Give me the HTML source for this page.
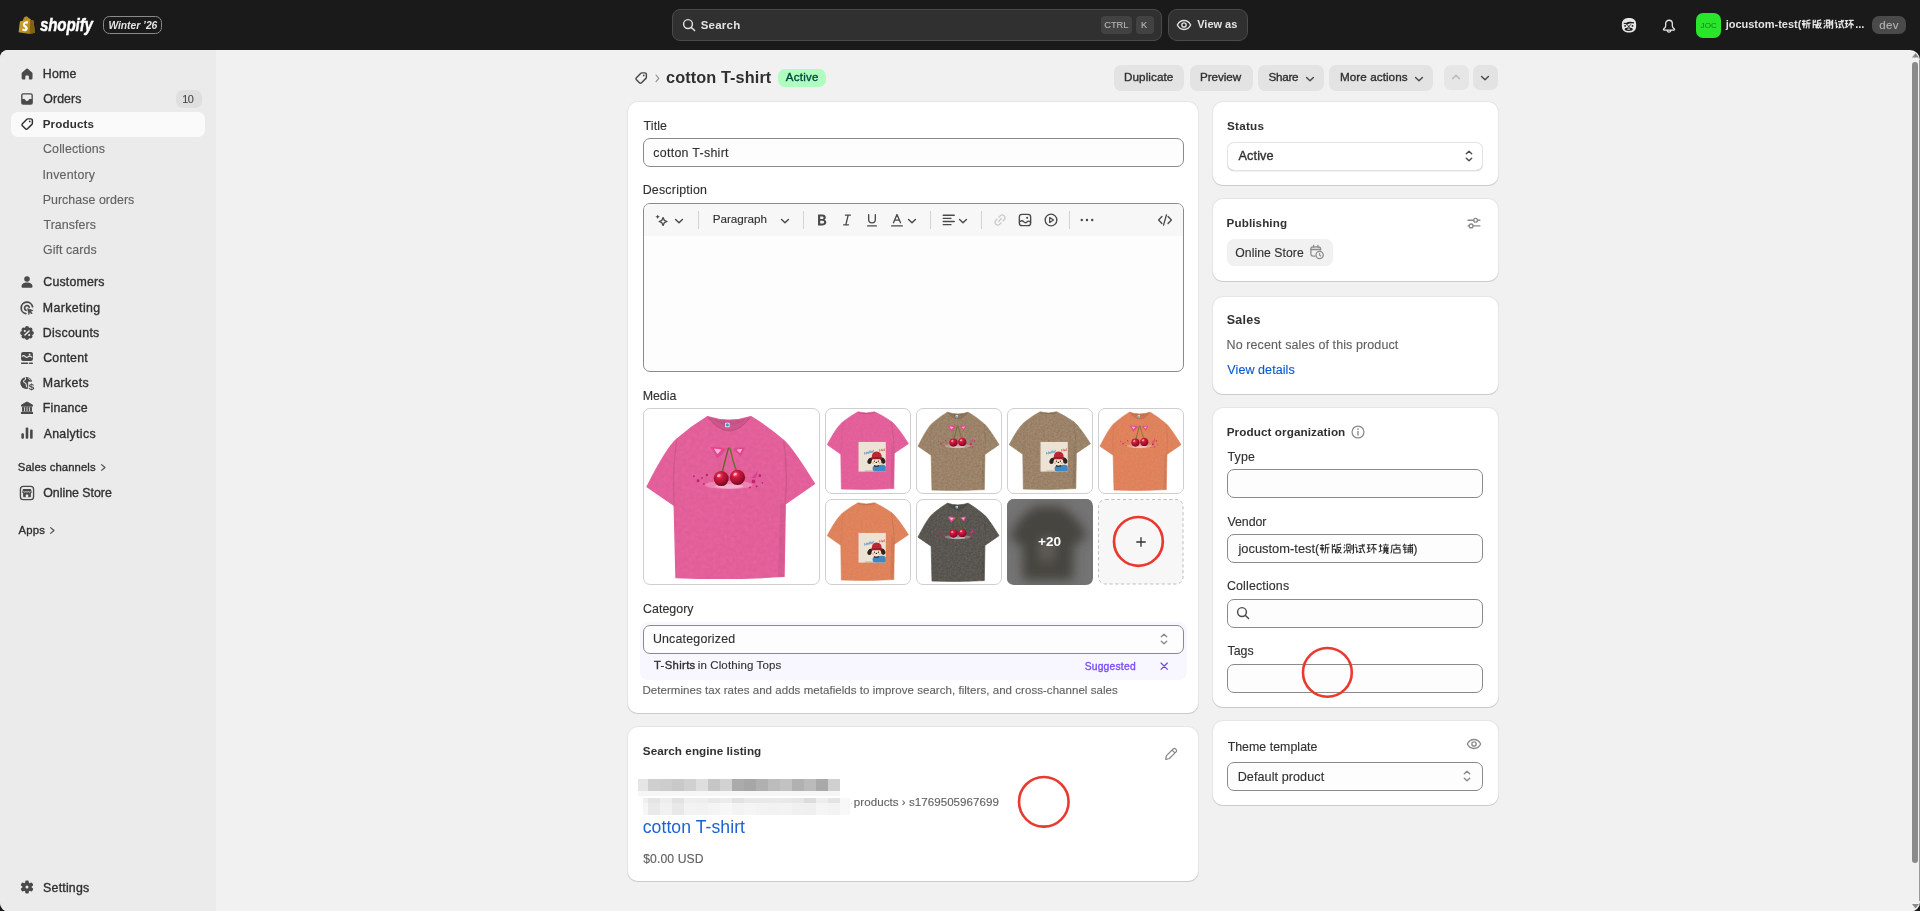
<!DOCTYPE html>
<html lang="en"><head><meta charset="utf-8"><title>cotton T-shirt · Shopify</title><style>
*{margin:0;padding:0}
html,body{width:1920px;height:911px;overflow:hidden;background:#1a1a1a}
body{font-family:"Liberation Sans",sans-serif;position:relative;-webkit-font-smoothing:antialiased}
#app{position:absolute;left:0;top:0;width:1920px;height:911px;will-change:transform}
.a{position:absolute;display:block}
.t{position:absolute;white-space:nowrap;line-height:1;font-family:"Liberation Sans",sans-serif}
svg{overflow:visible}
</style></head>
<body>
<div id="app">
<div class="a " style="left:0.00px;top:0.00px;width:1920.00px;height:911.00px;background:#1a1a1a"></div>
<div class="a " style="left:0.00px;top:49.60px;width:1920.00px;height:862.00px;background:#f1f1f1;border-radius:8px 10px 10px 9.5px;overflow:hidden"><div class="a " style="left:0.00px;top:0.00px;width:216.00px;height:862.00px;background:#ebebeb"></div></div>
<svg class="a" style="left:18.30px;top:15.90px;" width="17.40" height="18.60" viewBox="0 0 18 19.2">
<defs><linearGradient id="bagg" x1="0" y1="0" x2="1" y2="1"><stop offset="0" stop-color="#d9ab30"/><stop offset=".55" stop-color="#bd9224"/><stop offset="1" stop-color="#97741a"/></linearGradient></defs>
<path d="M5.3 4.6 C5.6 2.2 7 .5 8.6 .5 c1.1 0 1.9 .7 2.4 1.9 l1.5 .5 l1.2 1.4 l2.3 .4 l1.6 12.6 l-5.4 1.4 l-11.6 -2 L2 5.6 Z" fill="url(#bagg)"/>
<path d="M12.5 2.9 l1.2 1.4 l2.3 .4 l1.6 12.6 l-5.4 1.4 Z" fill="#84620f"/>
<path d="M6.3 4.5 C6.6 2.9 7.5 1.6 8.6 1.5 M8.4 4.2 C8.6 2.9 9.3 1.9 10.2 1.9" fill="none" stroke="#8d6a17" stroke-width=".7"/>
<path d="M11.1 7.3 l-.7 2 s-.7 -.4 -1.6 -.3 c-1.3 .1 -1.3 .9 -1.3 1.1 c.1 1.1 3 1.4 3.2 4 c.1 2.1 -1.1 3.5 -2.9 3.6 c-2.100 .1 -3.300 -1.100 -3.300 -1.100 l.5 -1.900 s1.200 .900 2.100 .800 c.6 0 .8 -.5 .8 -.9 c-.1 -1.500 -2.500 -1.400 -2.600 -3.800 c-.1 -2 1.200 -4.100 4.100 -4.300 c1.100 -.1 1.700 .2 1.700 .2 Z" fill="#fff" transform="translate(.2 -.6) scale(.92)"/>
</svg>
<div id="wordmark" class="t" style="left:40.2px;top:15.2px;font-size:19.2px;font-weight:bold;font-style:italic;color:#fff;letter-spacing:-0.2px;-webkit-text-stroke:0.45px #fff;transform-origin:0 0;transform:scaleX(.79)">shopify</div>
<div class="a " style="left:102.75px;top:16.00px;width:59.25px;height:18.00px;border:1px solid #8a8a8a;border-radius:6.5px;box-sizing:border-box"></div>
<div id="winter" class="t " style="left:108.38px;top:21.03px;font-size:10.30px;font-weight:bold;color:#e3e3e3;letter-spacing:-0.020px;font-style:italic;">Winter ’26</div>
<div class="a " style="left:672.00px;top:9.00px;width:490.00px;height:31.60px;background:#303030;border:1px solid #4a4a4a;border-radius:8px;box-sizing:border-box"></div>
<svg class="a" style="left:680.20px;top:16.10px;color:#e3e3e3;fill:currentColor;" width="18.00" height="18.00" viewBox="0 0 20 20"><path d="M13 13 L16.2 16.2" fill="none" stroke="currentColor" stroke-width="1.7" stroke-linecap="round" stroke-linejoin="round" /><circle cx="8.9" cy="8.9" r="4.9" fill="none" stroke="currentColor" stroke-width="1.6"/></svg>
<div id="search" class="t " style="left:700.63px;top:20.03px;font-size:11.50px;font-weight:bold;color:#e3e3e3;letter-spacing:0.235px;">Search</div>
<div class="a " style="left:1101.00px;top:16.00px;width:31.00px;height:18.00px;background:#424242;border-radius:4px"></div>
<div id="ctrl" class="t " style="left:1104.30px;top:21.03px;font-size:9.30px;font-weight:normal;color:#b5b5b5;letter-spacing:-0.084px;-webkit-text-stroke:0.12px #b5b5b5;">CTRL</div>
<div class="a " style="left:1136.00px;top:16.00px;width:18.00px;height:18.00px;background:#424242;border-radius:4px"></div>
<div id="kk" class="t " style="left:1140.96px;top:21.03px;font-size:9.30px;font-weight:normal;color:#b5b5b5;letter-spacing:0.000px;-webkit-text-stroke:0.12px #b5b5b5;">K</div>
<div class="a " style="left:1168.00px;top:9.00px;width:79.75px;height:31.60px;background:#303030;border:1px solid #4a4a4a;border-radius:9px;box-sizing:border-box"></div>
<svg class="a" style="left:1175.30px;top:16.20px;color:#e3e3e3;fill:currentColor;" width="18.00" height="18.00" viewBox="0 0 20 20"><path d="M2.6 10 c1.6 -3.3 4.3 -5 7.4 -5 s5.8 1.7 7.4 5 c-1.6 3.3 -4.3 5 -7.4 5 s-5.8 -1.7 -7.4 -5 Z" fill="none" stroke="currentColor" stroke-width="1.5" stroke-linecap="round" stroke-linejoin="round" /><circle cx="10" cy="10" r="2.4" fill="none" stroke="currentColor" stroke-width="1.5"/></svg>
<div id="viewas" class="t " style="left:1197.21px;top:19.03px;font-size:11.00px;font-weight:bold;color:#e3e3e3;letter-spacing:-0.003px;">View as</div>
<svg class="a" style="left:1620.40px;top:16.30px;color:#e8e8e8;fill:currentColor;" width="18.00" height="18.00" viewBox="0 0 20 20"><rect x="2.1" y="2.3" width="15.8" height="16.1" rx="6.4" fill="currentColor"/><path d="M4.1 7.9 q1.5 -.9 2.5 0 q3.4 -2.5 8.9 -.9 l.1 1.3 q-4.2 -.9 -7 .9 q-1.300 .700 -2.300 -.3 q-1 -.5 -2.100 .3 Z" fill="#1a1a1a"/><circle cx="5.7" cy="11" r="1.05" fill="#1a1a1a"/><circle cx="13.9" cy="11" r="1.05" fill="#1a1a1a"/><path d="M7.3 9.300 L11 12.600 M12.300 9.300 L8.600 12.600" stroke="#1a1a1a" stroke-width=".95" stroke-linecap="round" fill="none"/><ellipse cx="9.700" cy="14.700" rx="4.500" ry="1.900" fill="#1a1a1a"/><ellipse cx="9.700" cy="14.500" rx="2" ry=".65" fill="currentColor"/></svg>
<svg class="a" style="left:1660.40px;top:16.60px;color:#e3e3e3;fill:currentColor;" width="18.00" height="18.00" viewBox="0 0 20 20"><path d="M10 3.6 a3.7 3.7 0 0 0 -3.7 3.7 v2.4 c0 1 -.45 1.9 -1.15 2.6 l-1.1 1.1 c-.45 .45 -.15 1.2 .5 1.2 h10.9 c.65 0 .95 -.75 .5 -1.2 l-1.1 -1.1 c-.7 -.7 -1.15 -1.6 -1.15 -2.6 V7.3 A3.7 3.7 0 0 0 10 3.6 Z M7.9 15.2 a2.2 2.4 0 0 0 4.2 0" fill="none" stroke="currentColor" stroke-width="1.45" stroke-linecap="round" stroke-linejoin="round" /></svg>
<div class="a " style="left:1696.20px;top:13.00px;width:25.00px;height:25.00px;background:#29e62b;border-radius:7px"></div>
<div id="joc" class="t " style="left:1700.44px;top:22.03px;font-size:8.10px;font-weight:normal;color:#0f8316;letter-spacing:0.163px;-webkit-text-stroke:0.12px #0f8316;-webkit-text-stroke:0">JOC</div>
<div id="store" class="t " style="left:1725.64px;top:19.03px;font-size:11.00px;font-weight:bold;color:#e3e3e3;letter-spacing:0.000px;">jocustom-test(</div>
<svg class="a" style="left:1801.20px;top:18.90px" width="10.80" height="10.80" viewBox="0 0 10.6 10.6"><path d="M1 2.2h3.6M2.8 .8v3.2M.8 4.6h4M1.4 6.2l1-1.4M3.2 4.8l.9 1.6M2.8 4.6v4.6M5.6 1.6q2 -.2 3.6 -.8M5.8 1.4v4q0 2.6 -1 3.8M5.8 4.2h3.6M7.8 4.2v5.2" fill="none" stroke="#e3e3e3" stroke-width="1.30"/></svg><svg class="a" style="left:1812.00px;top:18.90px" width="10.80" height="10.80" viewBox="0 0 10.6 10.6"><path d="M1.2 .8v8.4M1.2 3h2.6M1.2 5.6h2.8v3.6M3.2 .8v2.2M5.2 1.6q2 -.2 3.8 -.8M5.4 1.4v3.4q0 3 -1 4.4M5.4 4h3.4q-.4 3 -3.2 5.2M6.2 5.2q1 2.6 3.2 4" fill="none" stroke="#e3e3e3" stroke-width="1.30"/></svg><svg class="a" style="left:1822.80px;top:18.90px" width="10.80" height="10.80" viewBox="0 0 10.6 10.6"><path d="M1 1.4l1 .9M.6 3.8l1 .9M.7 9.2l1.5 -3M3.4 1.2h3v5.6h-3zM4.9 2.8v2.4M3.6 9.2l1 -1.6M6 7.6l.9 1.6M8 1.8v4.6M9.4 .8v7.6q0 .9 -1.2 .8" fill="none" stroke="#e3e3e3" stroke-width="1.30"/></svg><svg class="a" style="left:1833.60px;top:18.90px" width="10.80" height="10.80" viewBox="0 0 10.6 10.6"><path d="M1.2 1.2l1 1M.6 3.8h1.8v4.4l1.4 -1M4 2.6h5.6M7.4 .8q.2 5.6 2.4 8.4M4.4 5h2.6M5.6 5v3.4M4.2 8.8l3 -.8M8.6 1l.8 .9" fill="none" stroke="#e3e3e3" stroke-width="1.30"/></svg><svg class="a" style="left:1844.40px;top:18.90px" width="10.80" height="10.80" viewBox="0 0 10.6 10.6"><path d="M.8 1.6h3.2M.8 4.6h3.2M2.4 1.6v6M.6 8.4l3.4 -1.2M4.6 1.4h5M7.2 1.4q-1 3.2 -2.8 5.2M7 3.8v5.6M7.6 4.4l1.8 2" fill="none" stroke="#e3e3e3" stroke-width="1.30"/></svg>
<div id="dots3" class="t " style="left:1855.24px;top:19.03px;font-size:11.00px;font-weight:bold;color:#e3e3e3;letter-spacing:0.000px;">...</div>
<div class="a " style="left:1872.00px;top:16.20px;width:34.20px;height:17.60px;background:#4a4a4a;border-radius:7px"></div>
<div id="dev" class="t " style="left:1879.29px;top:20.03px;font-size:11.50px;font-weight:normal;color:#b5b5b5;letter-spacing:0.288px;-webkit-text-stroke:0.12px #b5b5b5;">dev</div>
<div class="a " style="left:1912.00px;top:62.00px;width:6.00px;height:801.00px;background:#8a8a8a;border-radius:3px"></div>
<svg class="a" style="left:1911.60px;top:52.60px;" width="7.00" height="4.60" viewBox="0 0 7 4.6"><path d="M0 4.6 L3.5 0 L7 4.6 Z" fill="#8a8a8a"/></svg>
<svg class="a" style="left:1911.60px;top:903.60px;" width="7.00" height="4.60" viewBox="0 0 7 4.6"><path d="M0 0 L3.5 4.6 L7 0 Z" fill="#8a8a8a"/></svg>
<div class="a " style="left:1919.00px;top:60.00px;width:1.00px;height:841.00px;background:#9a9a9a"></div>
<svg class="a" style="left:18.20px;top:64.55px;color:#4a4a4a;fill:currentColor;" width="18.00" height="18.00" viewBox="0 0 20 20"><g transform="translate(10.10 10.10) scale(0.930) translate(-10 -10)"><path d="M9.1 3.75 a1.4 1.4 0 0 1 1.8 0 l5.05 4.3 a1.5 1.5 0 0 1 .55 1.15 V14.9 a1.6 1.6 0 0 1 -1.6 1.6 H12.6 a.5 .5 0 0 1 -.5 -.5 V13 a1.25 1.25 0 0 0 -1.25 -1.25 h-1.7 A1.25 1.25 0 0 0 7.9 13 v3 a.5 .5 0 0 1 -.5 .5 H5.1 a1.6 1.6 0 0 1 -1.6 -1.6 V9.2 a1.5 1.5 0 0 1 .55 -1.15 Z" fill="currentColor" /></g></svg>
<div id="n_home" class="t " style="left:42.80px;top:68.03px;font-size:12.35px;font-weight:normal;color:#303030;letter-spacing:0.245px;-webkit-text-stroke:0.35px #303030;">Home</div>
<svg class="a" style="left:18.20px;top:89.50px;color:#4a4a4a;fill:currentColor;" width="18.00" height="18.00" viewBox="0 0 20 20"><path d="M5.75 3.5 h8.5 A2.25 2.25 0 0 1 16.5 5.75 v8.5 a2.25 2.25 0 0 1 -2.25 2.25 h-8.5 A2.25 2.25 0 0 1 3.5 14.25 v-8.5 A2.25 2.25 0 0 1 5.75 3.5 Z M5.9 5 a.9 .9 0 0 0 -.9 .9 V10 h2.1 c.45 0 .8 .3 .95 .7 a2.05 2.05 0 0 0 3.9 0 c.15 -.4 .5 -.7 .95 -.7 H15 V5.9 a.9 .9 0 0 0 -.9 -.9 Z" fill="currentColor" fill-rule="evenodd"/></svg>
<div id="n_orders" class="t " style="left:43.20px;top:93.03px;font-size:12.35px;font-weight:normal;color:#303030;letter-spacing:0.114px;-webkit-text-stroke:0.35px #303030;">Orders</div>
<div class="a " style="left:176.00px;top:90.00px;width:25.50px;height:17.50px;background:#dfdfdf;border-radius:7px"></div>
<div id="n_10" class="t " style="left:182.27px;top:94.03px;font-size:10.90px;font-weight:normal;color:#4a4a4a;letter-spacing:-0.616px;-webkit-text-stroke:0.12px #4a4a4a;">10</div>
<div class="a " style="left:11.00px;top:112.20px;width:193.80px;height:24.80px;background:#fafafa;border-radius:7px"></div>
<svg class="a" style="left:18.20px;top:114.90px;color:#303030;fill:currentColor;" width="18.00" height="18.00" viewBox="0 0 20 20"><g transform="translate(10.15 10.10) scale(0.930) translate(-10 -10)"><path d="M10.9 3.75 h3.6 a1.75 1.75 0 0 1 1.75 1.75 v3.6 a1.75 1.75 0 0 1 -.51 1.24 l-5.3 5.3 a1.75 1.75 0 0 1 -2.48 0 l-3.6 -3.6 a1.75 1.75 0 0 1 0 -2.48 l5.3 -5.3 a1.75 1.75 0 0 1 1.24 -.51 Z" fill="none" stroke="currentColor" stroke-width="1.75" stroke-linecap="round" stroke-linejoin="round" /><circle cx="13.1" cy="6.9" r="1.05" fill="currentColor"/></g></svg>
<div id="n_products" class="t " style="left:42.76px;top:118.03px;font-size:11.60px;font-weight:bold;color:#303030;letter-spacing:0.132px;">Products</div>
<div id="n_coll" class="t " style="left:43.06px;top:143.03px;font-size:12.40px;font-weight:normal;color:#616161;letter-spacing:0.127px;-webkit-text-stroke:0.12px #616161;">Collections</div>
<div id="n_inv" class="t " style="left:42.41px;top:169.04px;font-size:12.40px;font-weight:normal;color:#616161;letter-spacing:0.206px;-webkit-text-stroke:0.12px #616161;">Inventory</div>
<div id="n_po" class="t " style="left:42.63px;top:194.04px;font-size:12.40px;font-weight:normal;color:#616161;letter-spacing:0.056px;-webkit-text-stroke:0.12px #616161;">Purchase orders</div>
<div id="n_tr" class="t " style="left:43.49px;top:219.04px;font-size:12.40px;font-weight:normal;color:#616161;letter-spacing:0.061px;-webkit-text-stroke:0.12px #616161;">Transfers</div>
<div id="n_gift" class="t " style="left:43.01px;top:244.04px;font-size:12.40px;font-weight:normal;color:#616161;letter-spacing:0.075px;-webkit-text-stroke:0.12px #616161;">Gift cards</div>
<svg class="a" style="left:18.20px;top:273.20px;color:#4a4a4a;fill:currentColor;" width="18.00" height="18.00" viewBox="0 0 20 20"><circle cx="10" cy="6.6" r="3.1" fill="currentColor"/><path d="M3.9 15 c0 -2.9 2.8 -4.4 6.1 -4.4 s6.1 1.5 6.1 4.4 c0 .85 -.65 1.5 -1.5 1.5 H5.4 c-.85 0 -1.5 -.65 -1.5 -1.5 Z" fill="currentColor" /></svg>
<div id="n_cust" class="t " style="left:43.27px;top:276.04px;font-size:12.35px;font-weight:normal;color:#303030;letter-spacing:0.197px;-webkit-text-stroke:0.35px #303030;">Customers</div>
<svg class="a" style="left:18.20px;top:298.90px;color:#4a4a4a;fill:currentColor;" width="18.00" height="18.00" viewBox="0 0 20 20"><path d="M16.2 8.6 A6.4 6.4 0 1 0 8.7 16.2" fill="none" stroke="currentColor" stroke-width="1.9" stroke-linecap="round" stroke-linejoin="round" /><path d="M12.5 9.0 A2.7 2.7 0 1 0 9.0 12.5" fill="none" stroke="currentColor" stroke-width="1.9" stroke-linecap="round" stroke-linejoin="round" /><path d="M10.6 10.6 l6.2 2.1 l-2.7 1.2 l1.8 1.8 l-.95 .95 l-1.8 -1.8 l-1.2 2.7 Z" fill="currentColor" stroke="currentColor" stroke-width=".6" stroke-linejoin="round"/></svg>
<div id="n_mkt" class="t " style="left:42.80px;top:302.03px;font-size:12.35px;font-weight:normal;color:#303030;letter-spacing:0.395px;-webkit-text-stroke:0.35px #303030;">Marketing</div>
<svg class="a" style="left:18.20px;top:324.00px;color:#4a4a4a;fill:currentColor;" width="18.00" height="18.00" viewBox="0 0 20 20"><circle cx="15.30" cy="10.00" r="2.35" fill="currentColor"/><circle cx="13.75" cy="13.75" r="2.35" fill="currentColor"/><circle cx="10.00" cy="15.30" r="2.35" fill="currentColor"/><circle cx="6.25" cy="13.75" r="2.35" fill="currentColor"/><circle cx="4.70" cy="10.00" r="2.35" fill="currentColor"/><circle cx="6.25" cy="6.25" r="2.35" fill="currentColor"/><circle cx="10.00" cy="4.70" r="2.35" fill="currentColor"/><circle cx="13.75" cy="6.25" r="2.35" fill="currentColor"/><circle cx="10" cy="10" r="6.1" fill="currentColor"/><path d="M7.7 12.3 L12.3 7.7" stroke="#ebebeb" stroke-width="1.65" stroke-linecap="round"/><circle cx="7.6" cy="7.8" r="1.2" fill="#ebebeb"/><circle cx="12.4" cy="12.2" r="1.2" fill="#ebebeb"/></svg>
<div id="n_disc" class="t " style="left:42.80px;top:327.03px;font-size:12.35px;font-weight:normal;color:#303030;letter-spacing:0.287px;-webkit-text-stroke:0.35px #303030;">Discounts</div>
<svg class="a" style="left:18.20px;top:349.20px;color:#4a4a4a;fill:currentColor;" width="18.00" height="18.00" viewBox="0 0 20 20"><path d="M5.6 3.4 h8.8 a2.2 2.2 0 0 1 2.2 2.2 v5.4 a2.2 2.2 0 0 1 -2.2 2.2 h-8.8 a2.2 2.2 0 0 1 -2.2 -2.2 V5.6 a2.2 2.2 0 0 1 2.2 -2.2 Z" fill="currentColor" /><path d="M4.6 8.0 c1.4 -1.0 2.5 -.7 3.6 .5 c1 1.100 1.900 1.100 2.900 .2 c1.200 -1.100 2.600 -1.100 4.300 .4" fill="none" stroke="#ebebeb" stroke-width="1.25" stroke-linecap="round"/><circle cx="12.900" cy="6.100" r="1" fill="#ebebeb"/><path d="M4.1 15.9 h6.6 M12.9 15.9 h3" fill="none" stroke="currentColor" stroke-width="1.6" stroke-linecap="round" stroke-linejoin="round" /></svg>
<div id="n_cont" class="t " style="left:43.27px;top:352.03px;font-size:12.35px;font-weight:normal;color:#303030;letter-spacing:0.188px;-webkit-text-stroke:0.35px #303030;">Content</div>
<svg class="a" style="left:18.20px;top:374.20px;color:#4a4a4a;fill:currentColor;" width="18.00" height="18.00" viewBox="0 0 20 20"><circle cx="9.3" cy="9.9" r="6.7" fill="currentColor"/><path d="M7.9 4.0 c1.2 1.3 .3 2.300 -.8 2.800 c-1.300 .6 -1.200 1.800 -.1 2.500 c1.400 .9 2.400 1.300 2.200 2.800 c-.1 1 .2 1.700 .7 2.300" fill="none" stroke="#ebebeb" stroke-width="1.15" stroke-linecap="round"/><path d="M12.2 4.3 c-.6 1.100 .1 1.900 1.300 2.200" fill="none" stroke="#ebebeb" stroke-width="1.05" stroke-linecap="round"/><rect x="11.3" y="8.500" width="8" height="10.5" fill="#ebebeb"/><text x="15.1" y="17.600" font-family="Liberation Sans" font-weight="bold" font-size="11" text-anchor="middle" fill="currentColor">$</text></svg>
<div id="n_mark" class="t " style="left:42.80px;top:377.03px;font-size:12.35px;font-weight:normal;color:#303030;letter-spacing:0.321px;-webkit-text-stroke:0.35px #303030;">Markets</div>
<svg class="a" style="left:18.20px;top:398.80px;color:#4a4a4a;fill:currentColor;" width="18.00" height="18.00" viewBox="0 0 20 20"><path d="M8.9 3.2 a2.2 2.2 0 0 1 2.2 0 l4.9 2.8 a1.300 1.300 0 0 1 .65 1.130 V7.500 a1 1 0 0 1 -1 1 H4.350 a1 1 0 0 1 -1 -1 V7.130 a1.300 1.300 0 0 1 .65 -1.130 Z" fill="currentColor" /><path d="M4.5 9.0 h11 v5 h-11 Z" fill="currentColor" /><path d="M7.3 9.300 v4.400 M10 9.300 v4.400 M12.700 9.300 v4.400" stroke="#ebebeb" stroke-width=".95"/><path d="M4.3 14.2 h11.400 a1.100 1.100 0 0 1 1.100 1.100 v.4 a1 1 0 0 1 -1 1 H4.200 a1 1 0 0 1 -1 -1 v-.4 a1.100 1.100 0 0 1 1.100 -1.100 Z" fill="currentColor" /></svg>
<div id="n_fin" class="t " style="left:42.80px;top:402.03px;font-size:12.35px;font-weight:normal;color:#303030;letter-spacing:0.165px;-webkit-text-stroke:0.35px #303030;">Finance</div>
<svg class="a" style="left:18.20px;top:424.40px;color:#4a4a4a;fill:currentColor;" width="18.00" height="18.00" viewBox="0 0 20 20"><rect x="3.7" y="10.2" width="2.9" height="6.1" rx="1" fill="currentColor"/><rect x="8.55" y="3.9" width="2.9" height="12.4" rx="1" fill="currentColor"/><rect x="13.4" y="6.2" width="2.9" height="10.1" rx="1" fill="currentColor"/></svg>
<div id="n_ana" class="t " style="left:43.65px;top:428.03px;font-size:12.35px;font-weight:normal;color:#303030;letter-spacing:0.318px;-webkit-text-stroke:0.35px #303030;">Analytics</div>
<div id="n_sales" class="t " style="left:17.83px;top:462.04px;font-size:11.30px;font-weight:normal;color:#303030;letter-spacing:0.084px;-webkit-text-stroke:0.35px #303030;">Sales channels</div>
<svg class="a" style="left:100.40px;top:462.90px;color:#4a4a4a" width="7.00" height="9.00" viewBox="0 0 7 9"><path d="M1.6 1.6 L5 4.5 L1.6 7.4" fill="none" stroke="currentColor" stroke-width="1.1" stroke-linecap="round" stroke-linejoin="round" /></svg>
<svg class="a" style="left:18.20px;top:483.90px;color:#4a4a4a;fill:currentColor;" width="18.00" height="18.00" viewBox="0 0 20 20"><rect x="2.7" y="2.7" width="14.6" height="14.6" rx="3.2" fill="none" stroke="currentColor" stroke-width="1.5"/><path d="M5.6 5.6 h8.8 l.8 3.1 a1.55 1.55 0 0 1 -.9 1.75 V14 a.8 .8 0 0 1 -.8 .8 H6.5 a.8 .8 0 0 1 -.8 -.8 v-3.55 a1.55 1.55 0 0 1 -.9 -1.75 Z" fill="currentColor" /><path d="M6.3 8.2 a1 1 0 0 0 2 0 M9 8.2 a1 1 0 0 0 2 0 M11.7 8.2 a1 1 0 0 0 2 0" fill="none" stroke="#ebebeb" stroke-width=".9"/><rect x="8.6" y="11.6" width="2.8" height="3.3" rx=".5" fill="#ebebeb"/></svg>
<div id="n_os" class="t " style="left:43.20px;top:487.04px;font-size:12.35px;font-weight:normal;color:#303030;letter-spacing:0.002px;-webkit-text-stroke:0.35px #303030;">Online Store</div>
<div id="n_apps" class="t " style="left:18.54px;top:525.02px;font-size:11.30px;font-weight:normal;color:#303030;letter-spacing:0.173px;-webkit-text-stroke:0.35px #303030;">Apps</div>
<svg class="a" style="left:49.40px;top:525.80px;color:#4a4a4a" width="7.00" height="9.00" viewBox="0 0 7 9"><path d="M1.6 1.6 L5 4.5 L1.6 7.4" fill="none" stroke="currentColor" stroke-width="1.1" stroke-linecap="round" stroke-linejoin="round" /></svg>
<svg class="a" style="left:18.20px;top:878.10px;color:#4a4a4a;fill:currentColor;" width="18.00" height="18.00" viewBox="0 0 20 20"><rect x="8.0" y="2.75" width="4.0" height="5.2" rx="1.35" fill="currentColor" transform="rotate(0 10 10)"/><rect x="8.0" y="2.75" width="4.0" height="5.2" rx="1.35" fill="currentColor" transform="rotate(60 10 10)"/><rect x="8.0" y="2.75" width="4.0" height="5.2" rx="1.35" fill="currentColor" transform="rotate(120 10 10)"/><rect x="8.0" y="2.75" width="4.0" height="5.2" rx="1.35" fill="currentColor" transform="rotate(180 10 10)"/><rect x="8.0" y="2.75" width="4.0" height="5.2" rx="1.35" fill="currentColor" transform="rotate(240 10 10)"/><rect x="8.0" y="2.75" width="4.0" height="5.2" rx="1.35" fill="currentColor" transform="rotate(300 10 10)"/><circle cx="10" cy="10" r="5.15" fill="currentColor"/><circle cx="10" cy="10" r="1.7" fill="#ebebeb"/></svg>
<div id="n_set" class="t " style="left:43.12px;top:882.03px;font-size:12.35px;font-weight:normal;color:#303030;letter-spacing:0.212px;-webkit-text-stroke:0.35px #303030;">Settings</div>
<svg class="a" style="left:632.10px;top:68.90px;color:#4a4a4a;fill:currentColor;" width="18.00" height="18.00" viewBox="0 0 20 20"><g transform="translate(10.15 10.10) scale(0.930) translate(-10 -10)"><path d="M10.9 3.75 h3.6 a1.75 1.75 0 0 1 1.75 1.75 v3.6 a1.75 1.75 0 0 1 -.51 1.24 l-5.3 5.3 a1.75 1.75 0 0 1 -2.48 0 l-3.6 -3.6 a1.75 1.75 0 0 1 0 -2.48 l5.3 -5.3 a1.75 1.75 0 0 1 1.24 -.51 Z" fill="none" stroke="currentColor" stroke-width="1.75" stroke-linecap="round" stroke-linejoin="round" /><circle cx="13.1" cy="6.9" r="1.05" fill="currentColor"/></g></svg>
<svg class="a" style="left:655.00px;top:74.40px;color:#8a8a8a" width="5.40" height="8.60" viewBox="0 0 5.4 8.6"><path d="M1 1 L3.8 4.3 L1 7.6" fill="none" stroke="currentColor" stroke-width="1.05" stroke-linecap="round" stroke-linejoin="round" /></svg>
<div id="h_title" class="t " style="left:666.00px;top:69.04px;font-size:16.30px;font-weight:bold;color:#303030;letter-spacing:0.094px;">cotton T-shirt</div>
<div class="a " style="left:777.75px;top:68.75px;width:48.25px;height:18.25px;background:#affebf;border-radius:7px"></div>
<div id="h_active" class="t " style="left:785.69px;top:72.03px;font-size:11.50px;font-weight:normal;color:#014b40;letter-spacing:0.286px;-webkit-text-stroke:0.35px #014b40;">Active</div>
<div class="a " style="left:1114.00px;top:65.00px;width:69.75px;height:25.60px;background:#e3e3e3;border-radius:7px"></div>
<div id="b_dup" class="t " style="left:1123.92px;top:71.04px;font-size:11.70px;font-weight:normal;color:#303030;letter-spacing:0.093px;-webkit-text-stroke:0.35px #303030;">Duplicate</div>
<div class="a " style="left:1190.25px;top:65.00px;width:62.50px;height:25.60px;background:#e3e3e3;border-radius:7px"></div>
<div id="b_prev" class="t " style="left:1199.92px;top:71.04px;font-size:11.70px;font-weight:normal;color:#303030;letter-spacing:-0.056px;-webkit-text-stroke:0.35px #303030;">Preview</div>
<div class="a " style="left:1258.10px;top:65.00px;width:65.65px;height:25.60px;background:#e3e3e3;border-radius:7px"></div>
<div id="b_share" class="t " style="left:1268.57px;top:71.04px;font-size:11.70px;font-weight:normal;color:#303030;letter-spacing:-0.315px;-webkit-text-stroke:0.35px #303030;">Share</div>
<svg class="a" style="left:1300.50px;top:69.90px;color:#4a4a4a;fill:currentColor;" width="18.00" height="18.00" viewBox="0 0 20 20"><path d="M6.2 8.3 L10 12 L13.8 8.3" fill="none" stroke="currentColor" stroke-width="1.6" stroke-linecap="round" stroke-linejoin="round" /></svg>
<div class="a " style="left:1329.00px;top:65.00px;width:103.75px;height:25.60px;background:#e3e3e3;border-radius:7px"></div>
<div id="b_more" class="t " style="left:1339.93px;top:71.04px;font-size:11.70px;font-weight:normal;color:#303030;letter-spacing:0.071px;-webkit-text-stroke:0.35px #303030;">More actions</div>
<svg class="a" style="left:1409.50px;top:69.90px;color:#4a4a4a;fill:currentColor;" width="18.00" height="18.00" viewBox="0 0 20 20"><path d="M6.2 8.3 L10 12 L13.8 8.3" fill="none" stroke="currentColor" stroke-width="1.6" stroke-linecap="round" stroke-linejoin="round" /></svg>
<div class="a " style="left:1444.00px;top:65.00px;width:24.75px;height:25.00px;background:#e6e6e6;border-radius:7px"></div>
<svg class="a" style="left:1447.40px;top:68.30px;color:#bdbdbd;fill:currentColor;" width="18.00" height="18.00" viewBox="0 0 20 20"><path d="M6.2 11.8 L10 8.1 L13.8 11.8" fill="none" stroke="currentColor" stroke-width="1.6" stroke-linecap="round" stroke-linejoin="round" /></svg>
<div class="a " style="left:1473.00px;top:65.00px;width:24.75px;height:25.00px;background:#e3e3e3;border-radius:7px"></div>
<svg class="a" style="left:1476.40px;top:69.00px;color:#4a4a4a;fill:currentColor;" width="18.00" height="18.00" viewBox="0 0 20 20"><path d="M6.2 8.3 L10 12 L13.8 8.3" fill="none" stroke="currentColor" stroke-width="1.6" stroke-linecap="round" stroke-linejoin="round" /></svg>
<div class="a " style="left:627.25px;top:101.00px;width:571.45px;height:612.70px;background:#fff;border-radius:11px;box-shadow:inset 0 0 0 1px rgba(0,0,0,.10), inset 0 -1px 0 rgba(0,0,0,.11), inset 0 1px 0 rgba(255,255,255,.5)"></div>
<div id="l_title" class="t " style="left:643.49px;top:120.04px;font-size:12.40px;font-weight:normal;color:#303030;letter-spacing:0.140px;-webkit-text-stroke:0.12px #303030;">Title</div>
<div class="a " style="left:643.00px;top:138.00px;width:541.00px;height:29.00px;background:#fdfdfd;border:1px solid #8a8a8a;border-radius:7px;box-sizing:border-box"></div>
<div id="v_title" class="t " style="left:653.28px;top:147.03px;font-size:12.40px;font-weight:normal;color:#303030;letter-spacing:0.297px;-webkit-text-stroke:0.12px #303030;">cotton T-shirt</div>
<div id="l_desc" class="t " style="left:642.63px;top:184.04px;font-size:12.40px;font-weight:normal;color:#303030;letter-spacing:0.237px;-webkit-text-stroke:0.12px #303030;">Description</div>
<div class="a " style="left:643.00px;top:203.00px;width:541.00px;height:169.00px;background:#fdfdfd;border:1px solid #8a8a8a;border-radius:7px;box-sizing:border-box;overflow:hidden"><div class="a " style="left:0.00px;top:0.00px;width:540.00px;height:31.60px;background:#f7f7f7"></div></div>
<svg class="a" style="left:652.60px;top:211.60px;color:#4a4a4a;fill:currentColor;" width="18.00" height="18.00" viewBox="0 0 20 20"><path d="M11.2 6.2 l1.35 3 l3 1.35 l-3 1.35 l-1.35 3 l-1.35 -3 l-3 -1.35 l3 -1.35 Z" fill="none" stroke="currentColor" stroke-width="1.5" stroke-linejoin="round"/><path d="M5.2 2.9 l.75 1.65 l1.65 .75 l-1.65 .75 l-.75 1.65 l-.75 -1.65 l-1.65 -.75 l1.65 -.75 Z" fill="currentColor" /></svg>
<svg class="a" style="left:670.30px;top:212.10px;color:#4a4a4a;fill:currentColor;" width="18.00" height="18.00" viewBox="0 0 20 20"><path d="M6.2 8.3 L10 12 L13.8 8.3" fill="none" stroke="currentColor" stroke-width="1.6" stroke-linecap="round" stroke-linejoin="round" /></svg>
<div class="a " style="left:698.00px;top:211.20px;width:1.00px;height:17.60px;background:#d4d4d4"></div>
<div id="tb_par" class="t " style="left:712.80px;top:213.03px;font-size:11.70px;font-weight:normal;color:#303030;letter-spacing:-0.061px;-webkit-text-stroke:0.12px #303030;">Paragraph</div>
<svg class="a" style="left:776.20px;top:212.10px;color:#4a4a4a;fill:currentColor;" width="18.00" height="18.00" viewBox="0 0 20 20"><path d="M6.2 8.3 L10 12 L13.8 8.3" fill="none" stroke="currentColor" stroke-width="1.6" stroke-linecap="round" stroke-linejoin="round" /></svg>
<div class="a " style="left:803.00px;top:211.20px;width:1.00px;height:17.60px;background:#d4d4d4"></div>
<svg class="a" style="left:813.20px;top:210.80px;color:#4a4a4a;fill:currentColor;" width="18.00" height="18.00" viewBox="0 0 20 20"><path d="M5.6 4 h4.9 c2.3 0 3.7 1.2 3.7 3.1 c0 1.3 -.7 2.2 -1.8 2.6 c1.5 .3 2.4 1.4 2.4 2.9 c0 2.1 -1.6 3.4 -4.1 3.4 H5.6 Z M8 6 v2.9 h2 c1.1 0 1.7 -.55 1.7 -1.45 S11.1 6 10 6 Z M8 10.8 V14 h2.4 c1.2 0 1.9 -.6 1.9 -1.6 s-.7 -1.6 -1.9 -1.6 Z" fill="currentColor" fill-rule="evenodd"/></svg>
<svg class="a" style="left:838.10px;top:210.80px;color:#4a4a4a;fill:currentColor;" width="18.00" height="18.00" viewBox="0 0 20 20"><path d="M8.3 4.6 h5.4 M6.3 15.4 h5.4 M11.3 4.6 L8.7 15.4" fill="none" stroke="currentColor" stroke-width="1.5" stroke-linecap="round" stroke-linejoin="round" /></svg>
<svg class="a" style="left:863.40px;top:211.30px;color:#4a4a4a;fill:currentColor;" width="18.00" height="18.00" viewBox="0 0 20 20"><path d="M6.3 4.2 v5.3 a3.7 3.7 0 0 0 7.4 0 V4.2 M5.2 16.6 h9.6" fill="none" stroke="currentColor" stroke-width="1.5" stroke-linecap="round" stroke-linejoin="round" /></svg>
<svg class="a" style="left:888.40px;top:211.30px;color:#4a4a4a;fill:currentColor;" width="18.00" height="18.00" viewBox="0 0 20 20"><path d="M6.1 13 L10 3.9 L13.9 13 M7.4 10.2 h5.2 M4.1 16.6 h11.8" fill="none" stroke="currentColor" stroke-width="1.5" stroke-linecap="round" stroke-linejoin="round" /></svg>
<svg class="a" style="left:903.40px;top:212.10px;color:#4a4a4a;fill:currentColor;" width="18.00" height="18.00" viewBox="0 0 20 20"><path d="M6.2 8.3 L10 12 L13.8 8.3" fill="none" stroke="currentColor" stroke-width="1.6" stroke-linecap="round" stroke-linejoin="round" /></svg>
<div class="a " style="left:930.00px;top:211.20px;width:1.00px;height:17.60px;background:#d4d4d4"></div>
<svg class="a" style="left:940.30px;top:211.10px;color:#4a4a4a;fill:currentColor;" width="18.00" height="18.00" viewBox="0 0 20 20"><path d="M3.6 4.7 h12.2 M3.6 8.2 h8.6 M3.6 11.7 h12.2 M3.6 15.2 h8.6" fill="none" stroke="currentColor" stroke-width="1.5" stroke-linecap="round" stroke-linejoin="round" /></svg>
<svg class="a" style="left:954.40px;top:212.10px;color:#4a4a4a;fill:currentColor;" width="18.00" height="18.00" viewBox="0 0 20 20"><path d="M6.2 8.3 L10 12 L13.8 8.3" fill="none" stroke="currentColor" stroke-width="1.6" stroke-linecap="round" stroke-linejoin="round" /></svg>
<div class="a " style="left:980.90px;top:211.20px;width:1.00px;height:17.60px;background:#d4d4d4"></div>
<svg class="a" style="left:991.30px;top:211.20px;color:#cccccc;fill:currentColor;" width="18.00" height="18.00" viewBox="0 0 20 20"><path d="M8.4 11.6 l3.2 -3.2 M9 6.7 l1.3 -1.3 a3 3 0 0 1 4.3 4.3 L13.3 11 M11 13.3 l-1.3 1.3 a3 3 0 0 1 -4.3 -4.3 L6.7 9" fill="none" stroke="currentColor" stroke-width="1.5" stroke-linecap="round" stroke-linejoin="round" /></svg>
<svg class="a" style="left:1016.20px;top:211.20px;color:#4a4a4a;fill:currentColor;" width="18.00" height="18.00" viewBox="0 0 20 20"><rect x="3.7" y="3.7" width="12.6" height="12.6" rx="3" fill="none" stroke="currentColor" stroke-width="1.5"/><path d="M3.9 12.3 c1.6 -1.9 3.3 -1.9 4.9 -.2 c1.1 1.2 2.2 1.2 3.3 .1 c1.3 -1.3 2.7 -1.2 4 .3" fill="none" stroke="currentColor" stroke-width="1.5" stroke-linecap="round" stroke-linejoin="round" /><circle cx="12.4" cy="7.6" r="1.15" fill="currentColor"/></svg>
<svg class="a" style="left:1042.10px;top:211.10px;color:#4a4a4a;fill:currentColor;" width="18.00" height="18.00" viewBox="0 0 20 20"><circle cx="10" cy="10" r="6.5" fill="none" stroke="currentColor" stroke-width="1.5"/><path d="M8.5 7.3 v5.4 l4.3 -2.7 Z" fill="none" stroke="currentColor" stroke-width="1.4" stroke-linecap="round" stroke-linejoin="round" /></svg>
<div class="a " style="left:1068.90px;top:211.20px;width:1.00px;height:17.60px;background:#d4d4d4"></div>
<svg class="a" style="left:1078.20px;top:211.10px;color:#4a4a4a;fill:currentColor;" width="18.00" height="18.00" viewBox="0 0 20 20"><circle cx="4.2" cy="10" r="1.35" fill="currentColor"/><circle cx="10" cy="10" r="1.35" fill="currentColor"/><circle cx="15.8" cy="10" r="1.35" fill="currentColor"/></svg>
<svg class="a" style="left:1156.20px;top:211.20px;color:#4a4a4a;fill:currentColor;" width="18.00" height="18.00" viewBox="0 0 20 20"><path d="M6.6 6.2 L2.9 10 L6.6 13.8 M13.4 6.2 L17.1 10 L13.4 13.8 M11.6 4.3 L8.4 15.7" fill="none" stroke="currentColor" stroke-width="1.5" stroke-linecap="round" stroke-linejoin="round" /></svg>
<div id="l_media" class="t " style="left:642.63px;top:390.04px;font-size:12.40px;font-weight:normal;color:#303030;letter-spacing:-0.019px;-webkit-text-stroke:0.12px #303030;">Media</div>

<svg width="0" height="0" style="position:absolute">
<defs>
<filter id="mottle" x="0" y="0" width="100%" height="100%">
  <feTurbulence type="fractalNoise" baseFrequency="0.4" numOctaves="3" seed="7" result="n"/>
  <feColorMatrix in="n" type="matrix" values="0 0 0 0 0  0 0 0 0 0  0 0 0 0 0  0.9 0.9 0 0 -0.62"/>
  <feComposite in2="SourceGraphic" operator="in"/>
</filter>
<filter id="mottleL" x="0" y="0" width="100%" height="100%">
  <feTurbulence type="fractalNoise" baseFrequency="0.45" numOctaves="3" seed="3" result="n"/>
  <feColorMatrix in="n" type="matrix" values="0 0 0 0 1  0 0 0 0 1  0 0 0 0 1  0.9 0.9 0 0 -0.68"/>
  <feComposite in2="SourceGraphic" operator="in"/>
</filter>
<filter id="blur20" x="-20%" y="-20%" width="140%" height="140%"><feGaussianBlur stdDeviation="6.5"/></filter>
<radialGradient id="ch" cx="38%" cy="30%" r="75%">
  <stop offset="0" stop-color="#f7728f"/><stop offset=".28" stop-color="#d31a3f"/><stop offset=".75" stop-color="#9a0c2a"/><stop offset="1" stop-color="#5e0618"/>
</radialGradient>
<g id="cherries">
  <ellipse cx="48.6" cy="43.6" rx="13.5" ry="2.3" fill="#ffd0e6" opacity=".34"/>
  <ellipse cx="48.8" cy="44.4" rx="8" ry="1.2" fill="#fff" opacity=".35"/>
  <path d="M61 39.5 q2.8 -1.2 4 -5 q-.2 3.6 -1.2 5.4 Z" fill="#d83a8c" opacity=".8"/>
  <g fill="#c4226f">
   <circle cx="28.8" cy="38.6" r=".55"/><circle cx="31.2" cy="41.2" r=".8"/><circle cx="33.4" cy="39.6" r=".5"/><circle cx="36.2" cy="38" r=".7"/><circle cx="34.4" cy="43" r=".5"/>
   <circle cx="62.6" cy="41.6" r="1.05"/><circle cx="66.2" cy="38.4" r=".8"/><circle cx="64.4" cy="44.4" r=".6"/><circle cx="60.6" cy="45" r=".5"/><circle cx="67.6" cy="42.4" r=".45"/>
  </g>
  <path d="M44.9 36.4 Q46.3 30 48.4 22.8" fill="none" stroke="#5f6428" stroke-width=".75" stroke-linecap="round"/>
  <path d="M52.9 35.6 Q50.8 30 49.3 22.8" fill="none" stroke="#6b6e2c" stroke-width=".75" stroke-linecap="round"/>
  <path d="M38.2 22.3 q4.2 -.6 8.8 .9 q-1.8 3 -5.2 5.4 q-.6 -2.4 -3.6 -6.3 Z" fill="#e2468d"/>
  <path d="M40.2 23.1 q2.4 -.1 4.2 .6 q-.9 1.3 -2.3 2.4 Z" fill="#f8b4d2"/>
  <path d="M57.9 22.5 q-3.8 -.6 -6.8 .6 q2 2.4 4.4 4.3 q.6 -2 2.4 -4.9 Z" fill="#e2468d"/>
  <path d="M56.2 23.3 q-1.8 -.1 -3.2 .4 q.9 1 2 1.8 Z" fill="#f8b4d2"/>
  <circle cx="44.3" cy="40" r="4.25" fill="url(#ch)"/>
  <circle cx="53.5" cy="39.3" r="4.35" fill="url(#ch)"/>
  <ellipse cx="42.9" cy="38.3" rx="1.1" ry=".7" fill="#fff" opacity=".55" transform="rotate(-30 42.9 38.3)"/>
  <ellipse cx="52.2" cy="37.5" rx="1.1" ry=".7" fill="#fff" opacity=".55" transform="rotate(-30 52.2 37.5)"/>
</g>
<g id="dogpatch">
  <rect x="39.2" y="39.7" width="31.9" height="34.7" fill="#ece3d5"/>
  <text x="46.2" y="54.6" font-family="Liberation Sans" font-style="italic" font-weight="bold" font-size="4.4" fill="#3a80bf" transform="rotate(-14 46.2 54.6)">Hello!</text>
  <text x="63.6" y="51" font-family="Liberation Sans" font-style="italic" font-weight="bold" font-size="4.2" fill="#d2452f" transform="rotate(-6 63.6 51)">Hel</text>
  <ellipse cx="52.6" cy="61.8" rx="2.7" ry="3.8" fill="#2b2421" transform="rotate(28 52.6 61.8)"/>
  <ellipse cx="67.6" cy="61.6" rx="2.7" ry="3.8" fill="#2b2421" transform="rotate(-28 67.6 61.6)"/>
  <path d="M55.6 70.6 Q55.8 67.2 59.6 67.2 L66.4 66.4 Q71.1 65.8 71.1 69.6 V74.4 H58.6 Q55.6 74.2 55.6 70.6 Z" fill="#3d88c4"/>
  <circle cx="66.8" cy="69.6" r=".5" fill="#b08a3a"/><circle cx="68.8" cy="72.2" r=".5" fill="#b08a3a"/><circle cx="64.4" cy="72.4" r=".5" fill="#b08a3a"/>
  <ellipse cx="60.1" cy="62.9" rx="5.7" ry="4.5" fill="#f4e4c9"/>
  <path d="M57.4 66.6 q2.8 1.8 5.6 0 l.4 1.4 q-3.2 1.4 -6.4 0 Z" fill="#2b2421"/>
  <path d="M54.6 58.6 Q54.4 51.2 60.4 51 Q66.6 51 66.4 58.6 Z" fill="#bb2733"/>
  <rect x="54" y="57.4" width="13" height="2.5" rx="1.2" fill="#9d1e29"/>
  <circle cx="57.8" cy="62.2" r=".75" fill="#1d1715"/><circle cx="62.5" cy="62.2" r=".75" fill="#1d1715"/>
  <ellipse cx="60.1" cy="63.6" rx=".95" ry=".7" fill="#1d1715"/>
  <circle cx="56.2" cy="64.4" r="1.05" fill="#f1a39c"/><circle cx="64" cy="64.4" r="1.05" fill="#f1a39c"/>
  <path d="M46.6 73.6 h11" stroke="#77716a" stroke-width=".45"/>
</g>
</defs>
</svg>

<div class="a " style="left:643.20px;top:408.20px;width:176.50px;height:176.50px;border:1px solid #cfcfcf;border-radius:7px;box-sizing:border-box;background:#fff;overflow:hidden"><svg class="a" style="left:-1px;top:-1px" width="176.50" height="176.50" viewBox="0 0 100 100"><clipPath id="cp1"><path d="M36.6 4.9 Q48.8 8.9 61.1 4.9 Q70.5 10.5 79.7 18.4 Q84.5 22.5 97.1 42.9 L80.6 54.3 L79.9 95.4 Q49 97.3 18.7 96 L17.7 55.2 L2.3 44.6 Q13.5 22.5 19.1 17.7 Q27.5 10.5 36.6 4.9 Z"/></clipPath><path d="M36.6 4.9 Q48.8 8.9 61.1 4.9 Q70.5 10.5 79.7 18.4 Q84.5 22.5 97.1 42.9 L80.6 54.3 L79.9 95.4 Q49 97.3 18.7 96 L17.7 55.2 L2.3 44.6 Q13.5 22.5 19.1 17.7 Q27.5 10.5 36.6 4.9 Z" fill="#e6609c" stroke="#e6609c" stroke-width=".8" stroke-linejoin="round"/><rect x="0" y="0" width="100" height="100" fill="#000" opacity="0.05" filter="url(#mottle)" clip-path="url(#cp1)"/><rect x="0" y="0" width="100" height="100" fill="#fff" opacity="0.06" filter="url(#mottleL)" clip-path="url(#cp1)"/><path d="M37.6 5.4 Q48.8 8.9 60.1 5.4 Q48.8 16.5 37.6 5.4 Z" fill="#000" opacity=".13"/><path d="M36.6 4.9 Q48.8 20.9 61.1 4.9 L58.9 5.6 Q48.8 14.2 38.8 5.6 Z" fill="#e6609c"/><path d="M36.6 4.9 Q48.8 20.9 61.1 4.9 L58.9 5.6 Q48.8 14.2 38.8 5.6 Z" fill="#000" opacity="0.10"/><path d="M36.9 5.4 Q48.8 20.6 60.8 5.4" fill="none" stroke="#000" stroke-opacity=".16" stroke-width=".5"/><rect x="46.5" y="8.3" width="2.6" height="2.6" rx=".5" fill="#e9f1f5"/><circle cx="47.8" cy="9.6" r=".95" fill="#3b9bd0"/><path d="M19.1 17.7 Q16.5 36 17.7 55.2" fill="none" stroke="#000" stroke-opacity=".09" stroke-width=".7"/><path d="M79.7 18.4 Q82.2 36 80.6 54.3" fill="none" stroke="#000" stroke-opacity=".10" stroke-width=".7"/><path d="M80.6 54.3 L79.9 95.4 L76.5 95.6 L77.8 54 Z" fill="#000" opacity=".05"/><use href="#cherries" transform="translate(48.8 36) scale(1.000) translate(-48.8 -36)"/></svg></div>
<div class="a " style="left:825.26px;top:408.20px;width:85.50px;height:85.50px;border:1px solid #cfcfcf;border-radius:7px;box-sizing:border-box;background:#fff;overflow:hidden"><svg class="a" style="left:-1px;top:-1px" width="85.50" height="85.50" viewBox="0 0 100 100"><clipPath id="cp2"><path d="M38.6 4.5 Q48.3 7.1 58.1 4.5 Q68.5 9.5 77.6 15.7 Q84.5 21 97.6 41.7 L81.1 52.9 L80.5 94.2 Q49 96.2 19.1 94.8 L18.5 54.1 L2.6 42.9 Q14 21 21.5 15.7 Q29.5 9.5 38.6 4.5 Z"/></clipPath><path d="M38.6 4.5 Q48.3 7.1 58.1 4.5 Q68.5 9.5 77.6 15.7 Q84.5 21 97.6 41.7 L81.1 52.9 L80.5 94.2 Q49 96.2 19.1 94.8 L18.5 54.1 L2.6 42.9 Q14 21 21.5 15.7 Q29.5 9.5 38.6 4.5 Z" fill="#e6609c" stroke="#e6609c" stroke-width=".8" stroke-linejoin="round"/><rect x="0" y="0" width="100" height="100" fill="#000" opacity="0.05" filter="url(#mottle)" clip-path="url(#cp2)"/><rect x="0" y="0" width="100" height="100" fill="#fff" opacity="0.05" filter="url(#mottleL)" clip-path="url(#cp2)"/><path d="M38.8 5.3 Q48.3 8 57.9 5.3" fill="none" stroke="#000" stroke-opacity=".12" stroke-width="1.4"/><path d="M77.6 15.7 Q80.5 34 81.1 52.9" fill="none" stroke="#000" stroke-opacity=".13" stroke-width=".8"/><path d="M21.5 15.7 Q18.2 34 18.5 54.1" fill="none" stroke="#000" stroke-opacity=".08" stroke-width=".7"/><path d="M81.1 52.9 L80.5 94.2 L76.8 94.5 L77.6 40 Z" fill="#000" opacity=".06"/><use href="#dogpatch"/></svg></div>
<div class="a " style="left:916.29px;top:408.20px;width:85.50px;height:85.50px;border:1px solid #cfcfcf;border-radius:7px;box-sizing:border-box;background:#fff;overflow:hidden"><svg class="a" style="left:-1px;top:-1px" width="85.50" height="85.50" viewBox="0 0 100 100"><clipPath id="cb1"><path d="M36.6 4.9 Q48.8 8.9 61.1 4.9 Q70.5 10.5 79.7 18.4 Q84.5 22.5 97.1 42.9 L80.6 54.3 L79.9 95.4 Q49 97.3 18.7 96 L17.7 55.2 L2.3 44.6 Q13.5 22.5 19.1 17.7 Q27.5 10.5 36.6 4.9 Z"/></clipPath><path d="M36.6 4.9 Q48.8 8.9 61.1 4.9 Q70.5 10.5 79.7 18.4 Q84.5 22.5 97.1 42.9 L80.6 54.3 L79.9 95.4 Q49 97.3 18.7 96 L17.7 55.2 L2.3 44.6 Q13.5 22.5 19.1 17.7 Q27.5 10.5 36.6 4.9 Z" fill="#a0866a" stroke="#a0866a" stroke-width=".8" stroke-linejoin="round"/><rect x="0" y="0" width="100" height="100" fill="#000" opacity="0.16" filter="url(#mottle)" clip-path="url(#cb1)"/><rect x="0" y="0" width="100" height="100" fill="#fff" opacity="0.13" filter="url(#mottleL)" clip-path="url(#cb1)"/><path d="M37.6 5.4 Q48.8 8.9 60.1 5.4 Q48.8 16.5 37.6 5.4 Z" fill="#000" opacity=".13"/><path d="M36.6 4.9 Q48.8 20.9 61.1 4.9 L58.9 5.6 Q48.8 14.2 38.8 5.6 Z" fill="#a0866a"/><path d="M36.6 4.9 Q48.8 20.9 61.1 4.9 L58.9 5.6 Q48.8 14.2 38.8 5.6 Z" fill="#000" opacity="0.12"/><path d="M36.9 5.4 Q48.8 20.6 60.8 5.4" fill="none" stroke="#000" stroke-opacity=".16" stroke-width=".5"/><rect x="46.5" y="8.3" width="2.6" height="2.6" rx=".5" fill="#e9f1f5"/><circle cx="47.8" cy="9.6" r=".95" fill="#3b9bd0"/><path d="M19.1 17.7 Q16.5 36 17.7 55.2" fill="none" stroke="#000" stroke-opacity=".09" stroke-width=".7"/><path d="M79.7 18.4 Q82.2 36 80.6 54.3" fill="none" stroke="#000" stroke-opacity=".10" stroke-width=".7"/><path d="M80.6 54.3 L79.9 95.4 L76.5 95.6 L77.8 54 Z" fill="#000" opacity=".05"/><use href="#cherries" transform="translate(48.8 36) scale(1.120) translate(-48.8 -36)"/></svg></div>
<div class="a " style="left:1007.32px;top:408.20px;width:85.50px;height:85.50px;border:1px solid #cfcfcf;border-radius:7px;box-sizing:border-box;background:#fff;overflow:hidden"><svg class="a" style="left:-1px;top:-1px" width="85.50" height="85.50" viewBox="0 0 100 100"><clipPath id="cb2"><path d="M38.6 4.5 Q48.3 7.1 58.1 4.5 Q68.5 9.5 77.6 15.7 Q84.5 21 97.6 41.7 L81.1 52.9 L80.5 94.2 Q49 96.2 19.1 94.8 L18.5 54.1 L2.6 42.9 Q14 21 21.5 15.7 Q29.5 9.5 38.6 4.5 Z"/></clipPath><path d="M38.6 4.5 Q48.3 7.1 58.1 4.5 Q68.5 9.5 77.6 15.7 Q84.5 21 97.6 41.7 L81.1 52.9 L80.5 94.2 Q49 96.2 19.1 94.8 L18.5 54.1 L2.6 42.9 Q14 21 21.5 15.7 Q29.5 9.5 38.6 4.5 Z" fill="#a0866a" stroke="#a0866a" stroke-width=".8" stroke-linejoin="round"/><rect x="0" y="0" width="100" height="100" fill="#000" opacity="0.16" filter="url(#mottle)" clip-path="url(#cb2)"/><rect x="0" y="0" width="100" height="100" fill="#fff" opacity="0.13" filter="url(#mottleL)" clip-path="url(#cb2)"/><path d="M38.8 5.3 Q48.3 8 57.9 5.3" fill="none" stroke="#000" stroke-opacity=".12" stroke-width="1.4"/><path d="M77.6 15.7 Q80.5 34 81.1 52.9" fill="none" stroke="#000" stroke-opacity=".13" stroke-width=".8"/><path d="M21.5 15.7 Q18.2 34 18.5 54.1" fill="none" stroke="#000" stroke-opacity=".08" stroke-width=".7"/><path d="M81.1 52.9 L80.5 94.2 L76.8 94.5 L77.6 40 Z" fill="#000" opacity=".06"/><use href="#dogpatch"/></svg></div>
<div class="a " style="left:1098.35px;top:408.20px;width:85.50px;height:85.50px;border:1px solid #cfcfcf;border-radius:7px;box-sizing:border-box;background:#fff;overflow:hidden"><svg class="a" style="left:-1px;top:-1px" width="85.50" height="85.50" viewBox="0 0 100 100"><clipPath id="co1"><path d="M36.6 4.9 Q48.8 8.9 61.1 4.9 Q70.5 10.5 79.7 18.4 Q84.5 22.5 97.1 42.9 L80.6 54.3 L79.9 95.4 Q49 97.3 18.7 96 L17.7 55.2 L2.3 44.6 Q13.5 22.5 19.1 17.7 Q27.5 10.5 36.6 4.9 Z"/></clipPath><path d="M36.6 4.9 Q48.8 8.9 61.1 4.9 Q70.5 10.5 79.7 18.4 Q84.5 22.5 97.1 42.9 L80.6 54.3 L79.9 95.4 Q49 97.3 18.7 96 L17.7 55.2 L2.3 44.6 Q13.5 22.5 19.1 17.7 Q27.5 10.5 36.6 4.9 Z" fill="#e2845c" stroke="#e2845c" stroke-width=".8" stroke-linejoin="round"/><rect x="0" y="0" width="100" height="100" fill="#000" opacity="0.05" filter="url(#mottle)" clip-path="url(#co1)"/><rect x="0" y="0" width="100" height="100" fill="#fff" opacity="0.06" filter="url(#mottleL)" clip-path="url(#co1)"/><path d="M37.6 5.4 Q48.8 8.9 60.1 5.4 Q48.8 16.5 37.6 5.4 Z" fill="#000" opacity=".13"/><path d="M36.6 4.9 Q48.8 20.9 61.1 4.9 L58.9 5.6 Q48.8 14.2 38.8 5.6 Z" fill="#e2845c"/><path d="M36.6 4.9 Q48.8 20.9 61.1 4.9 L58.9 5.6 Q48.8 14.2 38.8 5.6 Z" fill="#000" opacity="0.10"/><path d="M36.9 5.4 Q48.8 20.6 60.8 5.4" fill="none" stroke="#000" stroke-opacity=".16" stroke-width=".5"/><rect x="46.5" y="8.3" width="2.6" height="2.6" rx=".5" fill="#e9f1f5"/><circle cx="47.8" cy="9.6" r=".95" fill="#3b9bd0"/><path d="M19.1 17.7 Q16.5 36 17.7 55.2" fill="none" stroke="#000" stroke-opacity=".09" stroke-width=".7"/><path d="M79.7 18.4 Q82.2 36 80.6 54.3" fill="none" stroke="#000" stroke-opacity=".10" stroke-width=".7"/><path d="M80.6 54.3 L79.9 95.4 L76.5 95.6 L77.8 54 Z" fill="#000" opacity=".05"/><use href="#cherries" transform="translate(48.8 36) scale(1.120) translate(-48.8 -36)"/></svg></div>
<div class="a " style="left:825.26px;top:499.20px;width:85.50px;height:85.50px;border:1px solid #cfcfcf;border-radius:7px;box-sizing:border-box;background:#fff;overflow:hidden"><svg class="a" style="left:-1px;top:-1px" width="85.50" height="85.50" viewBox="0 0 100 100"><clipPath id="co2"><path d="M38.6 4.5 Q48.3 7.1 58.1 4.5 Q68.5 9.5 77.6 15.7 Q84.5 21 97.6 41.7 L81.1 52.9 L80.5 94.2 Q49 96.2 19.1 94.8 L18.5 54.1 L2.6 42.9 Q14 21 21.5 15.7 Q29.5 9.5 38.6 4.5 Z"/></clipPath><path d="M38.6 4.5 Q48.3 7.1 58.1 4.5 Q68.5 9.5 77.6 15.7 Q84.5 21 97.6 41.7 L81.1 52.9 L80.5 94.2 Q49 96.2 19.1 94.8 L18.5 54.1 L2.6 42.9 Q14 21 21.5 15.7 Q29.5 9.5 38.6 4.5 Z" fill="#e2845c" stroke="#e2845c" stroke-width=".8" stroke-linejoin="round"/><rect x="0" y="0" width="100" height="100" fill="#000" opacity="0.05" filter="url(#mottle)" clip-path="url(#co2)"/><rect x="0" y="0" width="100" height="100" fill="#fff" opacity="0.06" filter="url(#mottleL)" clip-path="url(#co2)"/><path d="M38.8 5.3 Q48.3 8 57.9 5.3" fill="none" stroke="#000" stroke-opacity=".12" stroke-width="1.4"/><path d="M77.6 15.7 Q80.5 34 81.1 52.9" fill="none" stroke="#000" stroke-opacity=".13" stroke-width=".8"/><path d="M21.5 15.7 Q18.2 34 18.5 54.1" fill="none" stroke="#000" stroke-opacity=".08" stroke-width=".7"/><path d="M81.1 52.9 L80.5 94.2 L76.8 94.5 L77.6 40 Z" fill="#000" opacity=".06"/><use href="#dogpatch"/></svg></div>
<div class="a " style="left:916.29px;top:499.20px;width:85.50px;height:85.50px;border:1px solid #cfcfcf;border-radius:7px;box-sizing:border-box;background:#fff;overflow:hidden"><svg class="a" style="left:-1px;top:-1px" width="85.50" height="85.50" viewBox="0 0 100 100"><clipPath id="cd1"><path d="M36.6 4.9 Q48.8 8.9 61.1 4.9 Q70.5 10.5 79.7 18.4 Q84.5 22.5 97.1 42.9 L80.6 54.3 L79.9 95.4 Q49 97.3 18.7 96 L17.7 55.2 L2.3 44.6 Q13.5 22.5 19.1 17.7 Q27.5 10.5 36.6 4.9 Z"/></clipPath><path d="M36.6 4.9 Q48.8 8.9 61.1 4.9 Q70.5 10.5 79.7 18.4 Q84.5 22.5 97.1 42.9 L80.6 54.3 L79.9 95.4 Q49 97.3 18.7 96 L17.7 55.2 L2.3 44.6 Q13.5 22.5 19.1 17.7 Q27.5 10.5 36.6 4.9 Z" fill="#5b5751" stroke="#5b5751" stroke-width=".8" stroke-linejoin="round"/><rect x="0" y="0" width="100" height="100" fill="#000" opacity="0.20" filter="url(#mottle)" clip-path="url(#cd1)"/><rect x="0" y="0" width="100" height="100" fill="#fff" opacity="0.12" filter="url(#mottleL)" clip-path="url(#cd1)"/><path d="M37.6 5.4 Q48.8 8.9 60.1 5.4 Q48.8 16.5 37.6 5.4 Z" fill="#000" opacity=".13"/><path d="M36.6 4.9 Q48.8 20.9 61.1 4.9 L58.9 5.6 Q48.8 14.2 38.8 5.6 Z" fill="#5b5751"/><path d="M36.6 4.9 Q48.8 20.9 61.1 4.9 L58.9 5.6 Q48.8 14.2 38.8 5.6 Z" fill="#000" opacity="0.14"/><path d="M36.9 5.4 Q48.8 20.6 60.8 5.4" fill="none" stroke="#000" stroke-opacity=".16" stroke-width=".5"/><rect x="46.5" y="8.3" width="2.6" height="2.6" rx=".5" fill="#e9f1f5"/><circle cx="47.8" cy="9.6" r=".95" fill="#3b9bd0"/><path d="M19.1 17.7 Q16.5 36 17.7 55.2" fill="none" stroke="#000" stroke-opacity=".09" stroke-width=".7"/><path d="M79.7 18.4 Q82.2 36 80.6 54.3" fill="none" stroke="#000" stroke-opacity=".10" stroke-width=".7"/><path d="M80.6 54.3 L79.9 95.4 L76.5 95.6 L77.8 54 Z" fill="#000" opacity=".05"/><use href="#cherries" transform="translate(48.8 36) scale(1.120) translate(-48.8 -36)"/></svg></div>
<div class="a " style="left:1007.32px;top:499.20px;width:85.50px;height:85.50px;border-radius:7px;overflow:hidden;background:#747474"><svg class="a" style="left:-1px;top:-1px" width="85.50" height="85.50" viewBox="0 0 100 100"><rect width="100" height="100" fill="#747474"/><path d="M36.6 4.9 Q48.8 8.9 61.1 4.9 Q70.5 10.5 79.7 18.4 Q84.5 22.5 97.1 42.9 L80.6 54.3 L79.9 95.4 Q49 97.3 18.7 96 L17.7 55.2 L2.3 44.6 Q13.5 22.5 19.1 17.7 Q27.5 10.5 36.6 4.9 Z" fill="#464441" filter="url(#blur20)" transform="translate(1.5 3) scale(.97)"/><ellipse cx="48" cy="60" rx="11" ry="16" fill="#77746f" opacity=".5" filter="url(#blur20)"/></svg></div>
<div id="plus20" class="t " style="left:1038.07px;top:535.03px;font-size:13.60px;font-weight:bold;color:#ffffff;letter-spacing:0.000px;">+20</div>
<svg class="a" style="left:1098.35px;top:499.20px;" width="85.50" height="85.50" viewBox="0 0 85.50 85.50"><rect x=".5" y=".5" width="84.50" height="84.50" rx="7" fill="#f7f7f7" stroke="#bdbdbd" stroke-width="1" stroke-dasharray="3.2 2.6"/></svg>
<svg class="a" style="left:1132.20px;top:533.30px;color:#303030;fill:currentColor;" width="18.00" height="18.00" viewBox="0 0 20 20"><path d="M10 5.3 v9.4 M5.3 10 h9.4" fill="none" stroke="currentColor" stroke-width="1.45" stroke-linecap="round" stroke-linejoin="round" /></svg>
<svg class="a" style="left:1111.20px;top:513.80px;" width="54.80" height="54.80" viewBox="0 0 54.80 54.80"><circle cx="27.40" cy="27.40" r="24.40" fill="none" stroke="#ea3a30" stroke-width="2.70"/></svg>
<div id="l_cat" class="t " style="left:643.02px;top:603.03px;font-size:12.40px;font-weight:normal;color:#303030;letter-spacing:0.032px;-webkit-text-stroke:0.12px #303030;">Category</div>
<div class="a " style="left:640.25px;top:621.90px;width:546.75px;height:57.85px;background:#f8f7ff;border-radius:8px"></div>
<div class="a " style="left:643.00px;top:625.00px;width:541.00px;height:29.00px;background:#fdfdfd;border:1px solid #8a8a8a;border-radius:7px;box-sizing:border-box"></div>
<div id="v_cat" class="t " style="left:652.88px;top:633.03px;font-size:12.40px;font-weight:normal;color:#303030;letter-spacing:0.196px;-webkit-text-stroke:0.12px #303030;">Uncategorized</div>
<svg class="a" style="left:1155.30px;top:630.40px;color:#8a8a8a;fill:currentColor;" width="18.00" height="18.00" viewBox="0 0 20 20"><path d="M7 7.6 L10 4.7 L13 7.6 M7 12.4 L10 15.3 L13 12.4" fill="none" stroke="currentColor" stroke-width="1.5" stroke-linecap="round" stroke-linejoin="round" /></svg>
<div id="sug_a" class="t " style="left:654.01px;top:660.03px;font-size:11.30px;font-weight:normal;color:#303030;letter-spacing:0.334px;-webkit-text-stroke:0.35px #303030;">T-Shirts</div>
<div id="sug_b" class="t " style="left:697.71px;top:660.03px;font-size:11.50px;font-weight:normal;color:#303030;letter-spacing:0.132px;-webkit-text-stroke:0.12px #303030;">in Clothing Tops</div>
<div id="sug_s" class="t " style="left:1084.63px;top:662.03px;font-size:10.30px;font-weight:normal;color:#7a4dfa;letter-spacing:0.219px;-webkit-text-stroke:0.35px #7a4dfa;">Suggested</div>
<svg class="a" style="left:1157.30px;top:659.40px;color:#6a3fe6;fill:currentColor;" width="14.40" height="14.40" viewBox="0 0 20 20"><path d="M5.6 5.6 L14.4 14.4 M14.4 5.6 L5.6 14.4" fill="none" stroke="currentColor" stroke-width="1.6" stroke-linecap="round" stroke-linejoin="round" /></svg>
<div id="cat_help" class="t " style="left:642.48px;top:685.04px;font-size:11.50px;font-weight:normal;color:#616161;letter-spacing:0.046px;-webkit-text-stroke:0.12px #616161;">Determines tax rates and adds metafields to improve search, filters, and cross-channel sales</div>
<div class="a " style="left:627.25px;top:725.90px;width:571.45px;height:156.50px;background:#fff;border-radius:11px;box-shadow:inset 0 0 0 1px rgba(0,0,0,.10), inset 0 -1px 0 rgba(0,0,0,.11), inset 0 1px 0 rgba(255,255,255,.5)"></div>
<div id="seo_h" class="t " style="left:642.82px;top:745.04px;font-size:11.70px;font-weight:bold;color:#303030;letter-spacing:0.043px;">Search engine listing</div>
<svg class="a" style="left:1162.10px;top:745.10px;color:#8a8a8a;fill:currentColor;" width="18.00" height="18.00" viewBox="0 0 20 20"><path d="M12.4 4.4 a1.9 1.9 0 0 1 2.7 0 l.5 .5 a1.9 1.9 0 0 1 0 2.7 L8.2 15 l-3.6 .9 a.4 .4 0 0 1 -.5 -.5 L5 11.8 Z M11.2 5.7 l3.1 3.1" fill="none" stroke="currentColor" stroke-width="1.4" stroke-linecap="round" stroke-linejoin="round" /></svg>
<div class="a " style="left:638.10px;top:779.00px;width:9.65px;height:11.90px;background:#e5e5e5"></div>
<div class="a " style="left:647.75px;top:779.00px;width:12.25px;height:11.90px;background:#cfcfcf"></div>
<div class="a " style="left:660.00px;top:779.00px;width:12.00px;height:11.90px;background:#cdcdcd"></div>
<div class="a " style="left:672.00px;top:779.00px;width:11.75px;height:11.90px;background:#c9c9c9"></div>
<div class="a " style="left:683.75px;top:779.00px;width:12.15px;height:11.90px;background:#d0d0d0"></div>
<div class="a " style="left:695.90px;top:779.00px;width:12.00px;height:11.90px;background:#dedede"></div>
<div class="a " style="left:707.90px;top:779.00px;width:12.10px;height:11.90px;background:#c6c6c6"></div>
<div class="a " style="left:720.00px;top:779.00px;width:11.90px;height:11.90px;background:#d2d2d2"></div>
<div class="a " style="left:731.90px;top:779.00px;width:12.10px;height:11.90px;background:#ababab"></div>
<div class="a " style="left:744.00px;top:779.00px;width:11.90px;height:11.90px;background:#a6a6a6"></div>
<div class="a " style="left:755.90px;top:779.00px;width:11.85px;height:11.90px;background:#b0b0b0"></div>
<div class="a " style="left:767.75px;top:779.00px;width:12.00px;height:11.90px;background:#bcbcbc"></div>
<div class="a " style="left:779.75px;top:779.00px;width:12.15px;height:11.90px;background:#c2c2c2"></div>
<div class="a " style="left:791.90px;top:779.00px;width:11.85px;height:11.90px;background:#b1b1b1"></div>
<div class="a " style="left:803.75px;top:779.00px;width:12.15px;height:11.90px;background:#bbbbbb"></div>
<div class="a " style="left:815.90px;top:779.00px;width:11.85px;height:11.90px;background:#a9a9a9"></div>
<div class="a " style="left:827.75px;top:779.00px;width:12.00px;height:11.90px;background:#d0d0d0"></div>
<div class="a " style="left:638.10px;top:790.90px;width:201.65px;height:5.10px;background:#f6f6f6"></div>
<div class="a " style="left:643.10px;top:798.00px;width:4.65px;height:16.75px;background:#f6f6f6"></div>
<div class="a " style="left:647.75px;top:798.00px;width:12.25px;height:16.75px;background:#e9e9e9"></div>
<div class="a " style="left:660.00px;top:798.00px;width:12.00px;height:16.75px;background:#f1f1f1"></div>
<div class="a " style="left:672.00px;top:798.00px;width:11.75px;height:16.75px;background:#e8e8e8"></div>
<div class="a " style="left:683.75px;top:798.00px;width:12.15px;height:16.75px;background:#f3f3f3"></div>
<div class="a " style="left:695.90px;top:798.00px;width:12.00px;height:16.75px;background:#f2f2f2"></div>
<div class="a " style="left:707.90px;top:798.00px;width:12.10px;height:16.75px;background:#f4f4f4"></div>
<div class="a " style="left:720.00px;top:798.00px;width:11.90px;height:16.75px;background:#f7f7f7"></div>
<div class="a " style="left:731.90px;top:798.00px;width:12.10px;height:16.75px;background:#f3f3f3"></div>
<div class="a " style="left:744.00px;top:798.00px;width:11.90px;height:16.75px;background:#f5f5f5"></div>
<div class="a " style="left:755.90px;top:798.00px;width:11.85px;height:16.75px;background:#f3f3f3"></div>
<div class="a " style="left:767.75px;top:798.00px;width:12.00px;height:16.75px;background:#f2f2f2"></div>
<div class="a " style="left:779.75px;top:798.00px;width:12.15px;height:16.75px;background:#f3f3f3"></div>
<div class="a " style="left:791.90px;top:798.00px;width:11.85px;height:16.75px;background:#f0f0f0"></div>
<div class="a " style="left:803.75px;top:798.00px;width:12.15px;height:16.75px;background:#efefef"></div>
<div class="a " style="left:815.90px;top:798.00px;width:11.85px;height:16.75px;background:#f5f5f5"></div>
<div class="a " style="left:827.75px;top:798.00px;width:12.00px;height:16.75px;background:#f3f3f3"></div>
<div class="a " style="left:839.75px;top:798.00px;width:10.00px;height:16.75px;background:#f8f8f8"></div>
<div class="a " style="left:643.10px;top:798.00px;width:4.65px;height:4.60px;background:#efefef"></div>
<div class="a " style="left:647.75px;top:798.00px;width:12.25px;height:4.60px;background:#e4e4e4"></div>
<div class="a " style="left:660.00px;top:798.00px;width:12.00px;height:4.60px;background:#ededed"></div>
<div class="a " style="left:672.00px;top:798.00px;width:11.75px;height:4.60px;background:#e2e2e2"></div>
<div class="a " style="left:683.75px;top:798.00px;width:12.15px;height:4.60px;background:#eeeeee"></div>
<div class="a " style="left:695.90px;top:798.00px;width:12.00px;height:4.60px;background:#ededed"></div>
<div class="a " style="left:707.90px;top:798.00px;width:12.10px;height:4.60px;background:#e8e8e8"></div>
<div class="a " style="left:720.00px;top:798.00px;width:11.90px;height:4.60px;background:#ececec"></div>
<div class="a " style="left:731.90px;top:798.00px;width:12.10px;height:4.60px;background:#e2e2e2"></div>
<div class="a " style="left:744.00px;top:798.00px;width:11.90px;height:4.60px;background:#e8e8e8"></div>
<div class="a " style="left:755.90px;top:798.00px;width:11.85px;height:4.60px;background:#e8e8e8"></div>
<div class="a " style="left:767.75px;top:798.00px;width:12.00px;height:4.60px;background:#e9e9e9"></div>
<div class="a " style="left:779.75px;top:798.00px;width:12.15px;height:4.60px;background:#e8e8e8"></div>
<div class="a " style="left:791.90px;top:798.00px;width:11.85px;height:4.60px;background:#e6e6e6"></div>
<div class="a " style="left:803.75px;top:798.00px;width:12.15px;height:4.60px;background:#dcdcdc"></div>
<div class="a " style="left:815.90px;top:798.00px;width:11.85px;height:4.60px;background:#ededed"></div>
<div class="a " style="left:827.75px;top:798.00px;width:12.00px;height:4.60px;background:#e4e4e4"></div>
<div id="seo_url" class="t " style="left:853.86px;top:797.04px;font-size:11.55px;font-weight:normal;color:#616161;letter-spacing:0.050px;-webkit-text-stroke:0.12px #616161;">products › s1769505967699</div>
<div class="a " style="left:850.60px;top:803.00px;width:1.40px;height:1.40px;background:#c4c4c4;border-radius:1px"></div>
<div id="seo_t" class="t " style="left:642.72px;top:819.03px;font-size:17.60px;font-weight:normal;color:#1a62d6;letter-spacing:0.070px;-webkit-text-stroke:0.12px #1a62d6;-webkit-text-stroke:0">cotton T-shirt</div>
<div id="seo_p" class="t " style="left:643.18px;top:853.03px;font-size:12.20px;font-weight:normal;color:#616161;letter-spacing:0.101px;-webkit-text-stroke:0.12px #616161;">$0.00 USD</div>
<svg class="a" style="left:1016.20px;top:774.00px;" width="55.60" height="55.60" viewBox="0 0 55.60 55.60"><circle cx="27.80" cy="27.80" r="24.80" fill="none" stroke="#ea3a30" stroke-width="2.60"/></svg>
<div class="a " style="left:1212.20px;top:101.00px;width:286.50px;height:84.80px;background:#fff;border-radius:11px;box-shadow:inset 0 0 0 1px rgba(0,0,0,.10), inset 0 -1px 0 rgba(0,0,0,.11), inset 0 1px 0 rgba(255,255,255,.5)"></div>
<div id="s_status" class="t " style="left:1227.04px;top:120.04px;font-size:11.70px;font-weight:bold;color:#303030;letter-spacing:0.226px;">Status</div>
<div class="a " style="left:1227.00px;top:142.00px;width:256.00px;height:28.60px;background:#fff;border-radius:7px;box-shadow:inset 0 0 0 1px #e3e3e3, inset 0 -1px 0 0 #b5b5b5, 0 1px 0 rgba(0,0,0,.05)"></div>
<div id="s_active" class="t " style="left:1238.52px;top:150.03px;font-size:12.70px;font-weight:normal;color:#303030;letter-spacing:0.100px;-webkit-text-stroke:0.35px #303030;">Active</div>
<svg class="a" style="left:1460.30px;top:147.40px;color:#4a4a4a;fill:currentColor;" width="18.00" height="18.00" viewBox="0 0 20 20"><path d="M7 7.6 L10 4.7 L13 7.6 M7 12.4 L10 15.3 L13 12.4" fill="none" stroke="currentColor" stroke-width="1.5" stroke-linecap="round" stroke-linejoin="round" /></svg>
<div class="a " style="left:1212.20px;top:198.20px;width:286.50px;height:84.30px;background:#fff;border-radius:11px;box-shadow:inset 0 0 0 1px rgba(0,0,0,.10), inset 0 -1px 0 rgba(0,0,0,.11), inset 0 1px 0 rgba(255,255,255,.5)"></div>
<div id="s_pub" class="t " style="left:1226.60px;top:217.03px;font-size:11.60px;font-weight:bold;color:#303030;letter-spacing:0.130px;">Publishing</div>
<svg class="a" style="left:1465.40px;top:214.40px;color:#8a8a8a;fill:currentColor;" width="18.00" height="18.00" viewBox="0 0 20 20"><path d="M3.4 6.9 h6.2 M14 6.9 h2.6 M3.4 13.2 h1.2 M9 13.2 h7.6" fill="none" stroke="currentColor" stroke-width="1.5" stroke-linecap="round" stroke-linejoin="round" /><circle cx="11.8" cy="6.9" r="2.1" fill="none" stroke="currentColor" stroke-width="1.5"/><circle cx="6.8" cy="13.2" r="2.1" fill="none" stroke="currentColor" stroke-width="1.5"/></svg>
<div class="a " style="left:1227.00px;top:239.20px;width:106.00px;height:26.60px;background:#f1f1f1;border-radius:7px"></div>
<div id="s_os" class="t " style="left:1235.30px;top:247.03px;font-size:12.20px;font-weight:normal;color:#303030;letter-spacing:0.066px;-webkit-text-stroke:0.12px #303030;">Online Store</div>
<svg class="a" style="left:1307.60px;top:243.30px;color:#8a8a8a;fill:currentColor;" width="18.00" height="18.00" viewBox="0 0 20 20"><path d="M7.6 14.6 H5.6 a2.4 2.4 0 0 1 -2.4 -2.4 V6.6 a2.4 2.4 0 0 1 2.4 -2.4 h6 a2.4 2.4 0 0 1 2.4 2.4 v1 M6.2 2.7 v2.2 M11 2.7 v2.2" fill="none" stroke="currentColor" stroke-width="1.4" stroke-linecap="round" stroke-linejoin="round" /><path d="M3.4 7.2 h10.4" fill="none" stroke="currentColor" stroke-width="1.9" stroke-linecap="round" stroke-linejoin="round" /><circle cx="12.9" cy="13.3" r="4.05" fill="#f1f1f1" stroke="currentColor" stroke-width="1.4"/><path d="M12.9 11.4 v2.1 l1.3 1" fill="none" stroke="currentColor" stroke-width="1.2" stroke-linecap="round" stroke-linejoin="round" /></svg>
<div class="a " style="left:1212.20px;top:296.20px;width:286.50px;height:98.50px;background:#fff;border-radius:11px;box-shadow:inset 0 0 0 1px rgba(0,0,0,.10), inset 0 -1px 0 rgba(0,0,0,.11), inset 0 1px 0 rgba(255,255,255,.5)"></div>
<div id="s_sales" class="t " style="left:1226.70px;top:314.03px;font-size:12.50px;font-weight:bold;color:#303030;letter-spacing:0.299px;">Sales</div>
<div id="s_nosales" class="t " style="left:1226.53px;top:339.03px;font-size:12.50px;font-weight:normal;color:#616161;letter-spacing:0.098px;-webkit-text-stroke:0.12px #616161;">No recent sales of this product</div>
<div id="s_view" class="t " style="left:1227.35px;top:364.03px;font-size:12.50px;font-weight:normal;color:#005bd3;letter-spacing:0.078px;-webkit-text-stroke:0.12px #005bd3;">View details</div>
<div class="a " style="left:1212.20px;top:406.90px;width:286.50px;height:300.80px;background:#fff;border-radius:11px;box-shadow:inset 0 0 0 1px rgba(0,0,0,.10), inset 0 -1px 0 rgba(0,0,0,.11), inset 0 1px 0 rgba(255,255,255,.5)"></div>
<div id="s_org" class="t " style="left:1226.74px;top:426.04px;font-size:11.70px;font-weight:bold;color:#303030;letter-spacing:0.086px;">Product organization</div>
<svg class="a" style="left:1349.40px;top:422.80px;color:#8a8a8a;fill:currentColor;" width="18.00" height="18.00" viewBox="0 0 20 20"><circle cx="10" cy="10" r="6.6" fill="none" stroke="currentColor" stroke-width="1.4"/><path d="M10 9.4 v4" fill="none" stroke="currentColor" stroke-width="1.5" stroke-linecap="round" stroke-linejoin="round" /><circle cx="10" cy="6.7" r=".95" fill="currentColor"/></svg>
<div id="s_type" class="t " style="left:1227.55px;top:451.03px;font-size:12.40px;font-weight:normal;color:#303030;letter-spacing:0.193px;-webkit-text-stroke:0.12px #303030;">Type</div>
<div class="a " style="left:1227.00px;top:469.00px;width:256.00px;height:29.00px;background:#fdfdfd;border:1px solid #8a8a8a;border-radius:7px;box-sizing:border-box"></div>
<div id="s_vendor" class="t " style="left:1227.57px;top:516.03px;font-size:12.40px;font-weight:normal;color:#303030;letter-spacing:-0.095px;-webkit-text-stroke:0.12px #303030;">Vendor</div>
<div class="a " style="left:1227.00px;top:534.00px;width:256.00px;height:29.00px;background:#fdfdfd;border:1px solid #8a8a8a;border-radius:7px;box-sizing:border-box"></div>
<div id="s_vval" class="t " style="left:1238.44px;top:543.04px;font-size:12.90px;font-weight:normal;color:#303030;letter-spacing:0.000px;-webkit-text-stroke:0.12px #303030;">jocustom-test(</div>
<svg class="a" style="left:1318.80px;top:542.77px" width="11.85" height="11.85" viewBox="0 0 10.6 10.6"><path d="M1 2.2h3.6M2.8 .8v3.2M.8 4.6h4M1.4 6.2l1-1.4M3.2 4.8l.9 1.6M2.8 4.6v4.6M5.6 1.6q2 -.2 3.6 -.8M5.8 1.4v4q0 2.6 -1 3.8M5.8 4.2h3.6M7.8 4.2v5.2" fill="none" stroke="#303030" stroke-width="0.95"/></svg><svg class="a" style="left:1330.65px;top:542.77px" width="11.85" height="11.85" viewBox="0 0 10.6 10.6"><path d="M1.2 .8v8.4M1.2 3h2.6M1.2 5.6h2.8v3.6M3.2 .8v2.2M5.2 1.6q2 -.2 3.8 -.8M5.4 1.4v3.4q0 3 -1 4.4M5.4 4h3.4q-.4 3 -3.2 5.2M6.2 5.2q1 2.6 3.2 4" fill="none" stroke="#303030" stroke-width="0.95"/></svg><svg class="a" style="left:1342.50px;top:542.77px" width="11.85" height="11.85" viewBox="0 0 10.6 10.6"><path d="M1 1.4l1 .9M.6 3.8l1 .9M.7 9.2l1.5 -3M3.4 1.2h3v5.6h-3zM4.9 2.8v2.4M3.6 9.2l1 -1.6M6 7.6l.9 1.6M8 1.8v4.6M9.4 .8v7.6q0 .9 -1.2 .8" fill="none" stroke="#303030" stroke-width="0.95"/></svg><svg class="a" style="left:1354.35px;top:542.77px" width="11.85" height="11.85" viewBox="0 0 10.6 10.6"><path d="M1.2 1.2l1 1M.6 3.8h1.8v4.4l1.4 -1M4 2.6h5.6M7.4 .8q.2 5.6 2.4 8.4M4.4 5h2.6M5.6 5v3.4M4.2 8.8l3 -.8M8.6 1l.8 .9" fill="none" stroke="#303030" stroke-width="0.95"/></svg><svg class="a" style="left:1366.20px;top:542.77px" width="11.85" height="11.85" viewBox="0 0 10.6 10.6"><path d="M.8 1.6h3.2M.8 4.6h3.2M2.4 1.6v6M.6 8.4l3.4 -1.2M4.6 1.4h5M7.2 1.4q-1 3.2 -2.8 5.2M7 3.8v5.6M7.6 4.4l1.8 2" fill="none" stroke="#303030" stroke-width="0.95"/></svg><svg class="a" style="left:1378.05px;top:542.77px" width="11.85" height="11.85" viewBox="0 0 10.6 10.6"><path d="M.8 2.8h3M2.2 .8v6.4M.6 8l3.4 -1.4M6.8 .6v1.2M4.6 1.8h5M5.6 2.8l.6 1.2M8.2 2.8l-.6 1.2M4.4 4.4h5.4M5.4 5.4h3.4v2.4h-3.4zM5.4 6.6h3.4M6 7.8q-.4 1.2 -1.8 1.6M7.6 7.8v.9q0 .6 .8 .6h1.2" fill="none" stroke="#303030" stroke-width="0.95"/></svg><svg class="a" style="left:1389.90px;top:542.77px" width="11.85" height="11.85" viewBox="0 0 10.6 10.6"><path d="M5.4 .6v1.4M1.6 2h8M1.6 2v3.6q0 2.4 -1 3.6M5.6 3.2v2.2M5.6 4.2h3.4M3.4 5.6h5.6v3.4h-5.6z" fill="none" stroke="#303030" stroke-width="0.95"/></svg><svg class="a" style="left:1401.75px;top:542.77px" width="11.85" height="11.85" viewBox="0 0 10.6 10.6"><path d="M2.4 .7q-.6 1.6 -1.8 2.6M2 2h2.2M1 3.8h3.2M.8 5.6h3.4M2.6 3.8v5l1.6 -1M5 2.2h5M7.4 .7v8.6M5.4 3.8v5.4M5.4 3.8h4v5q0 .5 -.8 .4M5.4 5.6h4M5.4 7.4h4M9 1l.7 .7" fill="none" stroke="#303030" stroke-width="0.95"/></svg>
<div id="s_vval2" class="t " style="left:1413.14px;top:543.04px;font-size:12.70px;font-weight:normal;color:#303030;letter-spacing:0.000px;-webkit-text-stroke:0.12px #303030;">)</div>
<div id="s_coll" class="t " style="left:1226.99px;top:580.03px;font-size:12.40px;font-weight:normal;color:#303030;letter-spacing:0.150px;-webkit-text-stroke:0.12px #303030;">Collections</div>
<div class="a " style="left:1227.00px;top:599.00px;width:256.00px;height:29.00px;background:#fdfdfd;border:1px solid #8a8a8a;border-radius:7px;box-sizing:border-box"></div>
<svg class="a" style="left:1234.40px;top:604.30px;color:#4a4a4a;fill:currentColor;" width="18.00" height="18.00" viewBox="0 0 20 20"><path d="M13 13 L16.2 16.2" fill="none" stroke="currentColor" stroke-width="1.7" stroke-linecap="round" stroke-linejoin="round" /><circle cx="8.9" cy="8.9" r="4.9" fill="none" stroke="currentColor" stroke-width="1.6"/></svg>
<div id="s_tags" class="t " style="left:1227.55px;top:645.02px;font-size:12.40px;font-weight:normal;color:#303030;letter-spacing:-0.012px;-webkit-text-stroke:0.12px #303030;">Tags</div>
<div class="a " style="left:1227.00px;top:664.00px;width:256.00px;height:29.00px;background:#fdfdfd;border:1px solid #8a8a8a;border-radius:7px;box-sizing:border-box"></div>
<svg class="a" style="left:1299.60px;top:644.90px;" width="54.80" height="54.80" viewBox="0 0 54.80 54.80"><circle cx="27.40" cy="27.40" r="24.40" fill="none" stroke="#ea3a30" stroke-width="2.60"/></svg>
<div class="a " style="left:1212.20px;top:720.00px;width:286.50px;height:85.80px;background:#fff;border-radius:11px;box-shadow:inset 0 0 0 1px rgba(0,0,0,.10), inset 0 -1px 0 rgba(0,0,0,.11), inset 0 1px 0 rgba(255,255,255,.5)"></div>
<div id="s_theme" class="t " style="left:1227.64px;top:741.02px;font-size:12.40px;font-weight:normal;color:#303030;letter-spacing:0.018px;-webkit-text-stroke:0.12px #303030;">Theme template</div>
<svg class="a" style="left:1465.30px;top:735.40px;color:#8a8a8a;fill:currentColor;" width="18.00" height="18.00" viewBox="0 0 20 20"><path d="M2.6 10 c1.6 -3.3 4.3 -5 7.4 -5 s5.8 1.7 7.4 5 c-1.6 3.3 -4.3 5 -7.4 5 s-5.8 -1.7 -7.4 -5 Z" fill="none" stroke="currentColor" stroke-width="1.5" stroke-linecap="round" stroke-linejoin="round" /><circle cx="10" cy="10" r="2.4" fill="none" stroke="currentColor" stroke-width="1.5"/></svg>
<div class="a " style="left:1227.00px;top:762.00px;width:256.00px;height:29.00px;background:#fdfdfd;border:1px solid #8a8a8a;border-radius:7px;box-sizing:border-box"></div>
<div id="s_def" class="t " style="left:1237.67px;top:771.03px;font-size:12.60px;font-weight:normal;color:#303030;letter-spacing:0.077px;-webkit-text-stroke:0.12px #303030;">Default product</div>
<svg class="a" style="left:1458.30px;top:767.30px;color:#8a8a8a;fill:currentColor;" width="18.00" height="18.00" viewBox="0 0 20 20"><path d="M7 7.6 L10 4.7 L13 7.6 M7 12.4 L10 15.3 L13 12.4" fill="none" stroke="currentColor" stroke-width="1.5" stroke-linecap="round" stroke-linejoin="round" /></svg>
</div>
</body></html>
